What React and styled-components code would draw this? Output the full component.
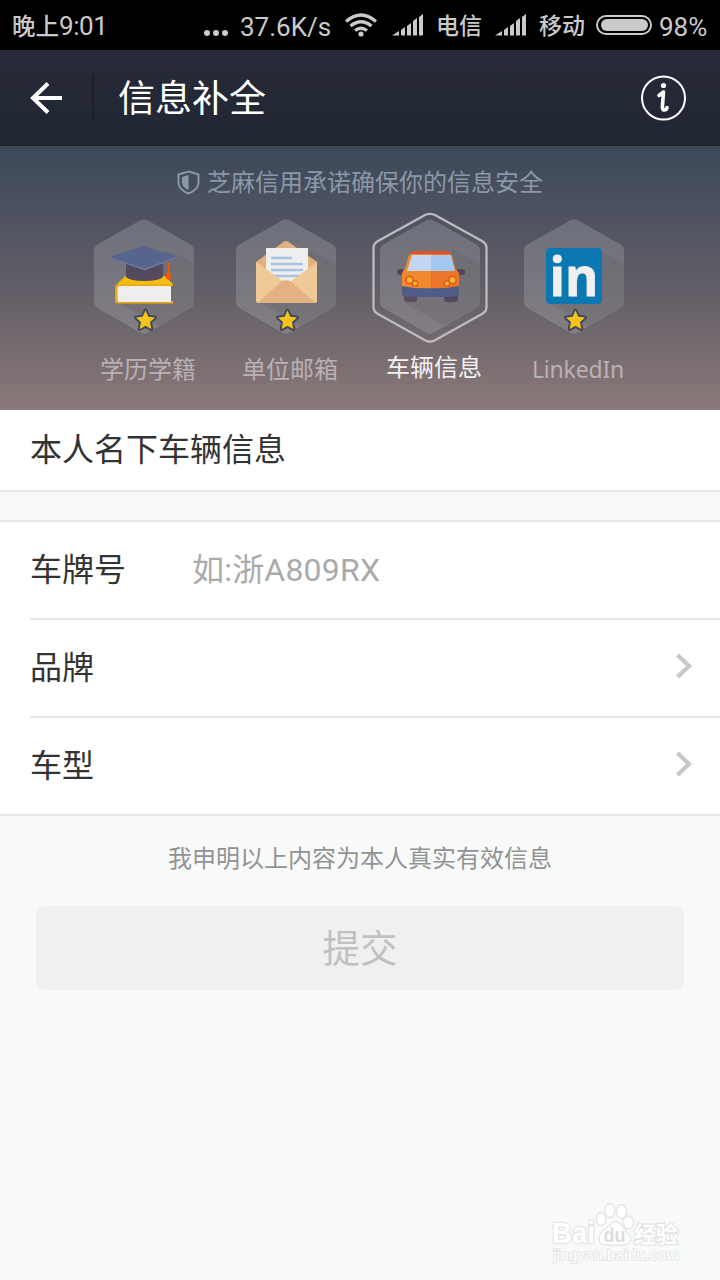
import React from "react";
import styled, { createGlobalStyle } from "styled-components";

const GlobalStyle = createGlobalStyle`
  * { box-sizing: border-box; }
  body {
    margin: 0;
    background: #f8faf9;
    font-family: Roboto, "Noto Sans CJK SC", sans-serif;
  }
  svg { display: block; flex: none; }
`;

const Screen = styled.div`
  width: 720px;
  height: 1280px;
  overflow: hidden;
  display: flex;
  flex-direction: column;
  background: #f8faf9;
`;

const StatusBar = styled.div`
  height: 50px;
  flex: none;
  padding-left: 12px;
  display: flex;
  align-items: center;
  background: #000;
  color: #cacaca;
`;

const StatusText = styled.span`
  width: ${(p) => p.$w}px;
  margin-left: ${(p) => p.$gap || 0}px;
  padding-top: ${(p) => p.$drop || 2}px;
  flex: none;
  font-size: ${(p) => p.$size || 25}px;
  font-weight: ${(p) => p.$weight || 400};
  line-height: 48px;
  white-space: nowrap;
`;

const Digits = styled.span`
  font-size: 26px;
  font-weight: 400;
  letter-spacing: -0.4px;
`;

const StatusIcon = styled.svg`
  margin-left: ${(p) => p.$gap}px;
`;

const Header = styled.header`
  height: 96px;
  flex: none;
  display: flex;
  align-items: center;
  padding: 0 34px 0 30px;
  background: linear-gradient(#272b39, #212633);
  border-bottom: 1px solid #1c1d2a;
`;

const HeaderDivider = styled.div`
  width: 2px;
  height: 48px;
  margin: 0 24px 0 29px;
  background: #1d1e2c;
`;

const Title = styled.h1`
  flex: 1;
  margin: 0;
  padding-top: 5px;
  font-size: 37px;
  font-weight: 400;
  line-height: 50px;
  color: #fff;
`;

const Banner = styled.section`
  height: 264px;
  flex: none;
  padding-top: 20px;
  background: linear-gradient(#3b4859, #4b5160 22%, #656068 58%, #8a7979);
`;

const Assurance = styled.p`
  height: 32px;
  margin: 0;
  display: flex;
  justify-content: center;
  align-items: center;
  gap: 7px;
  font-size: 24px;
  line-height: 32px;
  color: #8c97a7;

  span { padding-top: 2px; }
`;

const Tiles = styled.div`
  display: grid;
  grid-template-columns: 142px 142px 146px 142px;
  padding: 14px 0 0 73px;
`;

const Tile = styled.div`
  display: flex;
  flex-direction: column;
  align-items: center;
`;

const TileLabel = styled.span`
  margin-top: ${(p) => (p.$active ? 6 : 8)}px;
  padding-left: 8px;
  font-size: ${(p) => (p.$latin ? 23 : 24)}px;
  line-height: ${(p) => (p.$latin ? 34 : 37)}px;
  letter-spacing: ${(p) => (p.$latin ? -0.2 : 0)}px;
  font-family: ${(p) => (p.$latin ? '"Noto Sans", sans-serif' : "inherit")};
  color: ${(p) => (p.$active ? "#f3f1f2" : "#b9b1b4")};
`;

const SectionTitle = styled.h2`
  height: 82px;
  flex: none;
  margin: 0;
  padding-left: 30px;
  border-bottom: 2px solid #e4e6e5;
  background: #fff;
  font-size: 32px;
  font-weight: 400;
  line-height: 81px;
  color: #333;
`;

const Form = styled.div`
  flex: none;
  margin-top: 28px;
  padding-left: 30px;
  border-top: 2px solid #e6e8e7;
  border-bottom: 2px solid #e6e8e7;
  background: #fff;
`;

const Row = styled.div`
  height: ${(p) => (p.$last ? 96 : 98)}px;
  display: flex;
  align-items: center;
  padding: 0 27px 5px 0;
  border-bottom: ${(p) => (p.$last ? "0" : "2px solid #e6e6e6")};
  font-size: 32px;
  line-height: 46px;
  color: #333;
`;

const RowLabel = styled.span`
  width: 162px;
  padding-top: 5px;
`;

const Placeholder = styled.span`
  padding-top: 4px;
  letter-spacing: 0.2px;
  color: #aaa;
`;

const Spacer = styled.div`
  flex: 1;
`;

const Notice = styled.p`
  margin: 25px 0 0;
  text-align: center;
  font-size: 24px;
  line-height: 36px;
  color: #919393;
`;

const Submit = styled.button`
  flex: none;
  height: 84px;
  margin: 29px 36px 0;
  padding: 2px 0 0;
  border: 0;
  border-radius: 8px;
  background: #f0f0f0;
  font: 400 37.5px/82px Roboto, "Noto Sans CJK SC", sans-serif;
  color: #c0c0c0;
`;

const Footer = styled.div`
  margin: auto 32px 8px auto;
`;

const Signal = ({ gap }) => (
  <StatusIcon $gap={gap} width="32" height="22" viewBox="0 0 32 22" fill="#cacaca">
    <path d="M0 21.500 7 17v4.500ZM9 16l4-3v8.500H9ZM15 12l4-3v12.500h-4ZM21 7l4-3v17.500h-4ZM27 3l4-3v21.500h-4Z" />
  </StatusIcon>
);

const HEX =
  "M60 8.500Q64 6.500 68 8.500L110 32Q114 34.500 114 39V90Q114 94 110 96.500L68 120.500Q64 123 60 120.500L18 96.500Q14 94 14 90V39Q14 34.500 18 32Z";
const HEX_RING =
  "M59.500 2.800Q64 0.800 68.500 2.800L116 29Q120.500 31.500 120.500 36V95Q120.500 99.500 116 102L68.500 128.500Q64 131 59.500 128.500L12 102Q7.500 99.500 7.500 95V36Q7.500 31.500 12 29Z";

const Cap = () => (
  <g>
    <path d="M35 74 45 64H85l8 8v2H38v15h55v2.500H38q-3 0-3-3Z" fill="#e9aa0d" />
    <path d="M38 72 46 64H84l9 8.500H38Z" fill="#f0bd10" />
    <path d="M39.500 74H91V90H39.500Q37.500 90 37.500 88V76Q37.500 74 39.500 74Z" fill="#eee" />
    <path d="M46 52H83V65Q79 69 64.500 69 50 69 46 65Z" fill="#544a5c" />
    <path d="M63.500 33.800 95.500 44V46L65 58 31.500 46.500 31 44.500Z" fill="#56658e" />
    <path d="m31 45.500 34 11L96 44.500v1.500L65 58.500 31.500 47Z" fill="#6d769e" />
    <path d="M88.500 50.500V61" stroke="#f0580e" strokeWidth="1.300" />
    <path d="m88.500 59 2.500 3.500v4.500H86v-4.500Z" fill="#f0580e" />
  </g>
);

const Mail = () => (
  <g transform="translate(0 1)">
    <path d="M34 49 60 30q4-4 8 0L95 49v10H34Z" fill="#e4b07e" />
    <path d="M44 35H86V72H44Z" fill="#eee" />
    <path d="M49 45H70M49 51H81M49 57H81M52 63H78" stroke="#a8c4df" strokeWidth="2.500" />
    <path d="M34 49 65 71 95 49V88q0 2-2 2H36q-2 0-2-2Z" fill="#efc998" />
    <path d="M36 90 59 68.500q5-2.500 10 0L93.500 90Z" fill="#e4b282" />
  </g>
);

const Car = () => (
  <g transform="translate(0 1)">
    <rect x="38" y="78" width="13" height="11" rx="3.500" fill="#5a4b63" />
    <rect x="78" y="78" width="14" height="11" rx="3.500" fill="#544861" />
    <rect x="31" y="56" width="8" height="6" rx="3" fill="#544759" />
    <rect x="90" y="56" width="9" height="6" rx="3" fill="#544759" />
    <path d="M48 38H82q2 0 3 3H44q1-3 4-3Z" fill="#de5125" />
    <path d="M46 41H65V75H36V60q4-5 6-15 1-4 4-4Z" fill="#ef8a31" />
    <path d="M65 41H83q3 0 4 4 1 10 6 15V75H65Z" fill="#ea752b" />
    <path d="M46 42H65V58H41Z" fill="#c2d6f1" />
    <path d="M65 42H85L89 58H65Z" fill="#a5c8f0" />
    <path d="M36 73Q64 79 93 73V82Q88 84 84 84H45Q41 84 36 82Z" fill="#505b88" />
    <g fill="#e45e25">
      <circle cx="43.500" cy="67" r="4.500" /><circle cx="49" cy="70.500" r="3.500" />
      <circle cx="86.500" cy="67" r="4.500" /><circle cx="81" cy="70.500" r="3.500" />
    </g>
    <g fill="#efbd2a">
      <circle cx="43.500" cy="67" r="2.800" /><circle cx="49" cy="70.500" r="2" />
      <circle cx="86.500" cy="67" r="2.800" /><circle cx="81" cy="70.500" r="2" />
    </g>
  </g>
);

const LinkedInMark = () => (
  <g transform="translate(0 1)">
    <rect x="36" y="35" width="56" height="56" rx="4" fill="#0b78b1" />
    <text
      x="39.500" y="82.500" fontFamily="Open Sans" fontWeight="700" fontSize="54"
      textLength="49" lengthAdjust="spacingAndGlyphs" fill="#f0f0f0" stroke="#f0f0f0" strokeWidth="0.800"
    >
      in
    </text>
  </g>
);

const Badge = ({ active, children }) => (
  <svg width="128" height="132" viewBox="0 0 128 132">
    <path d={HEX} fill="#b4b4b8" fillOpacity=".3" />
    <path
      d="M87 38 114 51V90Q114 94 110 96.500L79 114 38 90.500Z"
      fill="#5c5c5c" fillOpacity=".25"
    />
    {active && <path d={HEX_RING} fill="none" stroke="#bdbbbe" strokeWidth="2.300" />}
    {children}
    {!active && (
      <path
        d="m65.500 98.500 2.800 6.200 6.700.8-5 4.600 1.300 6.900-5.800-3.200-5.800 3.200 1.300-6.900-5-4.600 6.700-.8Z"
        fill="#f3c41d" stroke="#424b57" strokeWidth="4" strokeLinejoin="round" paintOrder="stroke"
      />
    )}
  </svg>
);

const Chevron = () => (
  <svg width="18" height="26" viewBox="0 0 18 26" fill="none" stroke="#c7c7cc" strokeWidth="4.300">
    <path d="M2.500 2 14 13 2.500 24" />
  </svg>
);

const TILES = [
  { label: "学历学籍", Art: Cap },
  { label: "单位邮箱", Art: Mail },
  { label: "车辆信息", Art: Car, active: true },
  { label: "LinkedIn", Art: LinkedInMark, latin: true },
];

const Watermark = () => (
  <svg width="136" height="70" viewBox="0 0 136 70" fill="#fff" stroke="#e3e5e4" strokeWidth="1.300">
    <g fontFamily="Liberation Sans" fontWeight="700" paintOrder="stroke" strokeWidth="2.400">
      <text x="0" y="41" fontSize="29" textLength="43" lengthAdjust="spacingAndGlyphs">Bai</text>
      <text x="82" y="40" fontSize="22" fontFamily="Noto Sans CJK SC" textLength="44">经验</text>
    </g>
    <ellipse cx="49" cy="17" rx="5" ry="6.500" />
    <ellipse cx="58" cy="8.500" rx="5" ry="7" />
    <ellipse cx="69.500" cy="9.500" rx="5" ry="7" />
    <ellipse cx="76.500" cy="20.500" rx="5" ry="6.500" />
    <path d="M63 19.500Q68 19.500 72 26T79 36Q79 43 71 43H54Q46 43 47 36 48 31 53 27T63 19.500Z" />
    <text
      x="51.500" y="39.500" fontFamily="Liberation Sans" fontWeight="700" fontSize="20"
      fill="#dcdedd" stroke="none" textLength="22" lengthAdjust="spacingAndGlyphs"
    >
      du
    </text>
    <text
      x="1" y="58" fontFamily="Liberation Sans" fontSize="14" textLength="126"
      lengthAdjust="spacingAndGlyphs" paintOrder="stroke" strokeWidth="1.600"
    >
      jingyan.baidu.com
    </text>
  </svg>
);

export default function App() {
  return (
    <Screen>
      <GlobalStyle />
      <StatusBar>
        <StatusText $w={96} $size={23.5} $weight={500}>晚上<Digits>9:01</Digits></StatusText>
        <StatusIcon $gap={96} width="25" height="22" viewBox="0 0 25 22" fill="#cacaca">
          <circle cx="3" cy="19" r="3" />
          <circle cx="12" cy="19" r="3" />
          <circle cx="21" cy="19" r="3" />
        </StatusIcon>
        <StatusText $w={92} $gap={11} $size={26} $drop={4}>37.6K/s</StatusText>
        <StatusIcon
          $gap={13} width="32" height="26" viewBox="0 0 32 26"
          fill="none" stroke="#cacaca" strokeWidth="3.200"
        >
          <path d="M1 9.500Q16-3.500 31 9.500M5.500 14Q16 5.500 26.500 14M10 18.500Q16 14 22 18.500" />
          <circle cx="16" cy="22" r="2.600" fill="#cacaca" stroke="none" />
        </StatusIcon>
        <Signal gap={15} />
        <StatusText $w={46} $gap={12} $size={23} $weight={500} $drop={4}>电信</StatusText>
        <Signal gap={13} />
        <StatusText $w={46} $gap={12} $size={23} $weight={500} $drop={4}>移动</StatusText>
        <StatusIcon $gap={11} width="56" height="20" viewBox="0 0 56 20">
          <rect x="1" y="1" width="54" height="18" rx="9" fill="none" stroke="#cacaca" strokeWidth="2" />
          <rect x="5" y="4" width="47" height="12" rx="6" fill="#cacaca" />
        </StatusIcon>
        <StatusText $w={50} $gap={7} $size={26} $drop={4}>98%</StatusText>
      </StatusBar>

      <Header>
        <svg width="33" height="32" viewBox="0 0 33 32" fill="none" stroke="#fff" strokeWidth="4">
          <path d="M32 16H4M18 1.500 3 16 18 30.500" />
        </svg>
        <HeaderDivider />
        <Title>信息补全</Title>
        <svg width="46" height="46" viewBox="0 0 46 46" fill="none" stroke="#fff">
          <circle cx="23.500" cy="23" r="21.500" strokeWidth="2" />
          <circle cx="23.500" cy="10.500" r="2.600" fill="#fff" stroke="none" />
          <path d="M19 20.500 23.500 17 22.500 30Q22 35.500 24.500 35 27 34.500 27 32.500" strokeWidth="3.600" strokeLinecap="round" strokeLinejoin="round" />
        </svg>
      </Header>

      <Banner>
        <Assurance>
          <svg width="23" height="25" viewBox="0 0 23 25" fill="none" stroke="#8c97a7" strokeWidth="2">
            <path d="M11.500 1.500 21.500 4.500V13Q21.500 19.500 11.500 23.500 1.500 19.500 1.500 13V4.500Z" />
            <path d="M11.500 5V20Q5 17 5 12.500V7Z" fill="#8c97a7" stroke="none" />
          </svg>
          <span>芝麻信用承诺确保你的信息安全</span>
        </Assurance>
        <Tiles>
          {TILES.map(({ label, Art, active, latin }) => (
            <Tile key={label}>
              <Badge active={active}>
                <Art />
              </Badge>
              <TileLabel $active={active} $latin={latin}>{label}</TileLabel>
            </Tile>
          ))}
        </Tiles>
      </Banner>

      <SectionTitle>本人名下车辆信息</SectionTitle>

      <Form>
        <Row>
          <RowLabel>车牌号</RowLabel>
          <Placeholder>如:浙A809RX</Placeholder>
        </Row>
        <Row>
          <RowLabel>品牌</RowLabel>
          <Spacer />
          <Chevron />
        </Row>
        <Row $last>
          <RowLabel>车型</RowLabel>
          <Spacer />
          <Chevron />
        </Row>
      </Form>

      <Notice>我申明以上内容为本人真实有效信息</Notice>
      <Submit>提交</Submit>
      <Footer>
        <Watermark />
      </Footer>
    </Screen>
  );
}
